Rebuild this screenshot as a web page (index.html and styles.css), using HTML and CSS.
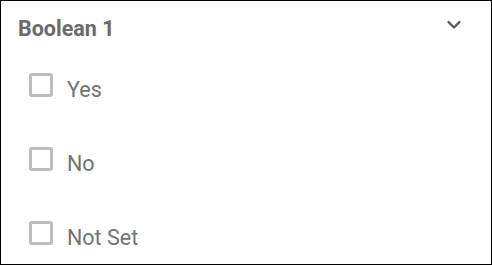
FILE: index.html
```html
<!DOCTYPE html>
<html>
<head>
<meta charset="utf-8">
<link rel="stylesheet" href="styles.css">
</head>
<body>
<div class="panel">
  <div class="header">
    <span class="title">Boolean 1</span>
    <svg class="chevron" width="16" height="10" viewBox="0 0 16 10"><polyline points="2.5,2 8,7.5 13.5,2" fill="none" stroke="#5a5a5a" stroke-width="2.4" stroke-linecap="round" stroke-linejoin="round"/></svg>
  </div>
  <div class="options">
    <label class="option"><span class="box"></span><span class="text">Yes</span></label>
    <label class="option"><span class="box"></span><span class="text">No</span></label>
    <label class="option"><span class="box"></span><span class="text">Not Set</span></label>
  </div>
</div>
</body>
</html>
```
FILE: styles.css
```css
html, body {
  margin: 0;
  padding: 0;
  background: #fff;
}
.panel {
  box-sizing: border-box;
  width: 492px;
  height: 265px;
  border: 1px solid #000;
  background: #fff;
  font-family: Roboto, "Liberation Sans", sans-serif;
  padding: 16px 29px 0 17px;
}
.header {
  display: flex;
  justify-content: space-between;
  align-items: flex-start;
  height: 24px;
}
.title {
  font-size: 21.5px;
  line-height: 24px;
  font-weight: 700;
  color: #6a6a6a;
}
.chevron {
  margin-top: 3px;
  display: block;
}
.options {
  display: flex;
  flex-direction: column;
  gap: 45px;
  margin-top: 32px;
  padding-left: 11px;
}
.option {
  display: flex;
  align-items: flex-start;
  gap: 14px;
  height: 29px;
}
.box {
  box-sizing: border-box;
  width: 24px;
  height: 24px;
  border: 3px solid #bdbdbd;
  border-radius: 3px;
}
.text {
  font-size: 21.5px;
  line-height: 24px;
  margin-top: 5px;
  color: #737373;
}
```
